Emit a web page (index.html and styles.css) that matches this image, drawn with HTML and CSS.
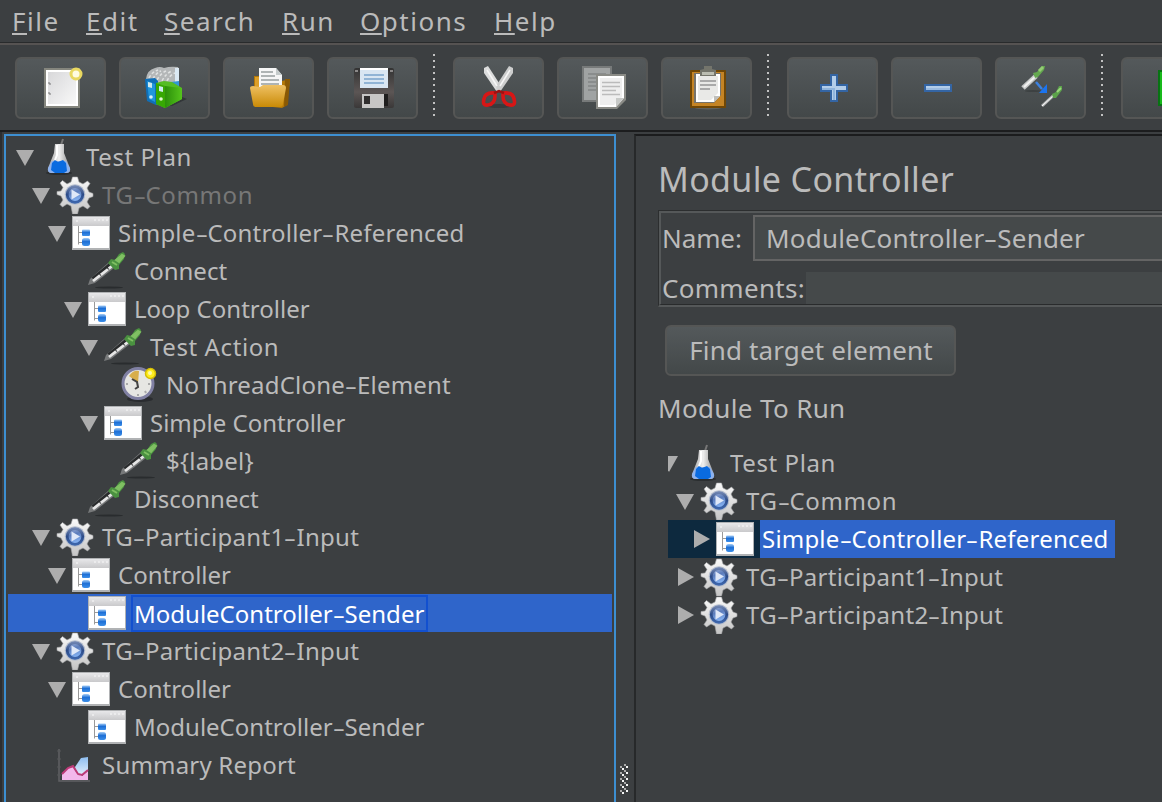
FILE: index.html
```html
<!DOCTYPE html>
<html lang="en">
<head>
<meta charset="utf-8">
<title>Module Controller</title>
<link rel="stylesheet" href="styles.css">
</head>
<body>
<svg class="defs" width="0" height="0">
  <defs>
    <linearGradient id="gBar" x2="0" y2="1"><stop offset="0" stop-color="#e8e8ea"/><stop offset="1" stop-color="#c9c9cb"/></linearGradient>
    <linearGradient id="gGear" x2="0" y2="1"><stop offset="0" stop-color="#fafafa"/><stop offset="1" stop-color="#c4c4c4"/></linearGradient>
    <linearGradient id="gBlue" x2="0.3" y2="1"><stop offset="0" stop-color="#a4b6dc"/><stop offset=".45" stop-color="#5b7cbb"/><stop offset="1" stop-color="#86b4f5"/></linearGradient>
    <linearGradient id="gRing" x2="0" y2="1"><stop offset="0" stop-color="#6d83b0"/><stop offset=".5" stop-color="#2d4c88"/><stop offset="1" stop-color="#3c65ab"/></linearGradient>
    <linearGradient id="gGlass" x2="1" y2="0"><stop offset="0" stop-color="#9a9a9a"/><stop offset=".5" stop-color="#f0f0f0"/><stop offset="1" stop-color="#8d8d8d"/></linearGradient>
    <linearGradient id="gFolder" x2="0" y2="1"><stop offset="0" stop-color="#efc164"/><stop offset="1" stop-color="#c98a06"/></linearGradient>
    <linearGradient id="gPage" x2="1" y2="1"><stop offset="0" stop-color="#d8d8da"/><stop offset="1" stop-color="#f8f8f8"/></linearGradient>
    <linearGradient id="gDisk" x2="0" y2="1"><stop offset="0" stop-color="#333"/><stop offset=".6" stop-color="#5c5655"/><stop offset="1" stop-color="#3a3838"/></linearGradient>
    <linearGradient id="gArea" x2="0" y2="1"><stop offset="0" stop-color="#8dbdf0"/><stop offset="1" stop-color="#e6f1fd"/></linearGradient>
    <linearGradient id="gGreen" x2="1" y2="0"><stop offset="0" stop-color="#2b8f0a"/><stop offset="1" stop-color="#55c41c"/></linearGradient>
    <linearGradient id="gNode" x2="0" y2="1"><stop offset="0" stop-color="#a5cdf6"/><stop offset=".45" stop-color="#1d6fd6"/><stop offset="1" stop-color="#3d8fe8"/></linearGradient>
  </defs>
  <symbol id="down" viewBox="0 0 18 38"><path d="M0 12h18L9 28z" fill="#adadad"/></symbol>
  <symbol id="right" viewBox="0 0 18 38"><path d="M2 10v18l16-9z" fill="#adadad"/></symbol>
  <symbol id="flask" viewBox="0 0 38 38">
    <ellipse cx="19" cy="35" rx="13" ry="2" fill="#2b2e30"/>
    <path d="M23 1l-2 6" stroke="#777" stroke-width="2"/>
    <path d="M15 6h9v9l6 15q1 5-4 5H12q-5 0-4-5l6-15z" fill="url(#gGlass)"/>
    <path d="M12 23h14l4 7q1 5-4 5H12q-5 0-4-5z" fill="#8db2ee"/>
    <path d="M12 25l3-3 3 2 5-2 3 3 1 8-3 2h-9l-4-3z" fill="#0a6be0"/>
    <path d="M17 7v10l-2 5" stroke="#fff" stroke-width="2" fill="none"/>
  </symbol>
  <symbol id="gear" viewBox="0 0 38 38">
    <path d="M16.500 1h5l1.500 5 4 2 4.500-3 2.500 2.500-3 4.500 2 4 4 1.500v3l-4 1.500-2 4 3 4.500-2.500 2.500-4.500-3-4 2-1.500 6h-5L15 30l-4-2-4.500 3L4 28.500 7 24l-2-4-4-1.500v-3L5 15l2-3.500L4 7l2.500-2.500L11 8l4-2z" fill="url(#gGear)" stroke="#a4a6a7" stroke-width=".6"/>
    <circle cx="19" cy="18.500" r="10.300" fill="#b3bccd"/>
    <circle cx="19" cy="18.500" r="7.800" fill="url(#gBlue)" stroke="url(#gRing)" stroke-width="2.800"/>
    <path d="M15.500 13.500l8.500 5-8.500 5z" fill="#dfe8f8"/>
  </symbol>
  <symbol id="window" viewBox="0 0 38 38">
    <path d="M0 2h38v34H0z" fill="#b0b2b4"/><path d="M1 11h36v23H1z" fill="#fff"/>
    <path d="M1 3h36v9H1z" fill="url(#gBar)"/>
    <path d="M4 7h2M22 6h2m2 0h2m2 0h2m2 0h2" stroke="#efeff1" stroke-width="1.500"/>
    <path d="M6.500 12v18.500M6 18.500h4M6 28.500h4" stroke="#999" fill="none"/>
    <rect x="10" y="15.500" width="8" height="6.500" rx="1" fill="url(#gNode)"/>
    <rect x="10" y="24" width="8" height="8" rx="2.500" fill="url(#gNode)"/>
  </symbol>
  <symbol id="dropper" viewBox="0 0 38 38">
    <ellipse cx="21" cy="35.500" rx="14" ry="1" fill="#292c2e"/>
    <path d="M0 33l2-6L20 11l6 5L7 31z" fill="#77797a"/>
    <path d="M5 27L22 13" stroke="#292b2c" stroke-width="4"/>
    <path d="M5 29L24 14" stroke="#e6e6e6" stroke-width="2.800" stroke-dasharray="9 1"/>
    <path d="M20 11l3-4 4 1 4-6 4-2 2 2-1 5-5 6v4l-4 1z" fill="#4a9140"/>
    <path d="M24 10l5 3M28 8l6-5 2 1-5 6z" stroke="#7fbf62" stroke-width="2" fill="#83c466"/>
  </symbol>
  <symbol id="timer" viewBox="0 0 38 38">
    <ellipse cx="20" cy="33" rx="13" ry="3" fill="#2a2c30"/>
    <circle cx="18" cy="17.500" r="15" fill="#e6e6e3" stroke="#8080a3" stroke-width="3"/>
    <path d="M18 17L9 10q4-6 10-5z" fill="#d8ae4c"/>
    <path d="M12 13l5 3 1 5-3 2" stroke="#444" stroke-width="2" fill="none"/>
    <path d="M18 28v2M28 18h2M6 18h2M25 25l1 2" stroke="#aaa" stroke-width="2"/>
    <circle cx="30.500" cy="7.500" r="5" fill="#ffee20" stroke="#d4bd05" stroke-width="1.500"/><circle cx="30" cy="7" r="2" fill="#fff9a9"/>
  </symbol>
  <symbol id="chart" viewBox="0 0 38 38">
    <path d="M3 3v32h31" stroke="#606264" stroke-width="1.500" fill="none"/>
    <path d="M1 5h4M1 13h4M1 21h4M1 29h4" stroke="#56585a"/>
    <path d="M19 21l6-9 7-1v14l-7 5-5-1z" fill="url(#gArea)"/>
    <path d="M6 34v-6l6-6 5-1 5 8 4 1 6-5v9z" fill="#f3b8ec"/>
    <path d="M6 28l6-6 5-2 5 8 4 1 6-5" stroke="#bd3a78" stroke-width="2" fill="none"/>
  </symbol>
</svg>

<nav class="menubar">
  <span><u>F</u>ile</span><span><u>E</u>dit</span><span><u>S</u>earch</span><span><u>R</u>un</span><span><u>O</u>ptions</span><span><u>H</u>elp</span>
</nav>

<div class="toolbar">
  <div class="group">
    <button class="tool"><svg viewBox="0 0 48 48"><path d="M8 4h36v40H8z" fill="#85867e"/><path d="M10 6h32v36H10z" fill="#fff"/><path d="M12 8h28v32H12z" fill="url(#gPage)"/><path d="M12 19h2v2m-2 8h2v2" stroke="#777" fill="none"/><circle cx="40" cy="10" r="5" fill="#fffce0" stroke="#e9d860" stroke-width="3"/></svg></button>
    <button class="tool"><svg viewBox="0 0 48 48">
      <path d="M24 42l18-9 5 2-15 7z" fill="#333739"/>
      <path d="M6 15q1-9 9-11 5-2 9 0 6-2 14-1l1 3v16H20z" fill="#b4b7b8"/>
      <path d="M9 14q3-6 9-8M13 15q3-6 8-8M17 16q4-7 9-9M22 17q4-8 10-10M27 17q3-6 8-8" stroke="#e0e2e2" stroke-width="1.500" stroke-dasharray="3 2" fill="none"/>
      <path d="M35 4h4v17h-4z" fill="#dbe9f3"/>
      <path d="M5 15l10-1 3 3v23l-2 1-9-4z" fill="#0f6fb8"/><path d="M7 17l8 3v18l-6-3z" fill="#2196dd"/>
      <path d="M31 18l8-1v8z" fill="#3297d6"/>
      <path d="M16 19l8-2 8 1 10 6v11l-17 9-9-4z" fill="#55bd24"/><path d="M25 22l17 2v11l-17 9z" fill="url(#gGreen)"/><path d="M16 19l9 3v22l-9-4z" fill="#37a803"/>
      <path d="M8 18l4 1v5l-4-1zM19 22l4 1v5l-4-1z" fill="#cdeaf0"/><circle cx="11" cy="33" r="1.800" fill="#d8effc"/><circle cx="21" cy="35" r="1.800" fill="#dff6ce"/></svg></button>
    <button class="tool"><svg viewBox="0 0 48 48">
      <path d="M10 12h6v5h22l8-2-3 26-5 3-28-3z" fill="#b37808"/><path d="M11 13h5v12h-5z" fill="#dc9f28"/><path d="M41 15l5 0-2 26-4 2z" fill="#895905"/>
      <path d="M15 4h17l6 7v14H15z" fill="#f5f6f6"/><path d="M32 4v7h6z" fill="#c5cccc"/><path d="M17 8h12M17 12h14M17 16h18M17 20h18" stroke="#aeb4b4" stroke-width="2"/>
      <path d="M6 24q0-2 3-2l7 1 3-2h20q3 0 3 3l-3 16q0 3-3 3H12q-3 0-3-3z" fill="url(#gFolder)"/></svg></button>
    <button class="tool"><svg viewBox="0 0 48 48"><rect x="6" y="4" width="40" height="40" rx="2" fill="url(#gDisk)"/><path d="M12 4h28v20H12z" fill="#d9e6f2"/><path d="M12 4h28v2H12z" fill="#fff"/><path d="M16 11h20M16 15h20M16 19h20" stroke="#91b4d5" stroke-width="1.800"/><path d="M14 30h22v14H14z" fill="#c7c6c5"/><path d="M36 30h4v12h-4z" fill="#1f1e1e"/><path d="M16 32h6v8h-6z" fill="#302e2e"/><path d="M7 6h3v2H7zM42 6h3v2h-3z" fill="#8a8888"/></svg></button>
  </div>
  <i class="sep"></i>
  <div class="group">
    <button class="tool"><svg viewBox="0 0 48 48"><ellipse cx="25" cy="42" rx="12" ry="2" fill="#383b3d"/><path d="M10 4l4-2 13 20-1 6-3 0L10 9z" fill="#dcdddd"/><path d="M39 4l-4-2-13 20 1 6 3 0L39 9z" fill="#cdcece"/><path d="M13 6l10 16M36 6L26 22" stroke="#f6f6f6" stroke-width="1.500"/><path d="M21 29q-10-1-11 6-2 7 4 6 7-1 7-9zM29 29q10-1 11 6 2 7-4 6-7-1-7-9z" fill="none" stroke="#d71616" stroke-width="3.600"/><path d="M20 29l5-2 5 2" stroke="#9c1212" stroke-width="2.500" fill="none"/></svg></button>
    <button class="tool"><svg viewBox="0 0 48 48"><path d="M4 2h30v36H4z" fill="#777a7a"/><path d="M6 4h26v32H6z" fill="#a0a3a3"/><path d="M10 10h18M10 14h18M10 18h18M10 22h18M10 26h18" stroke="#838686" stroke-width="1.500"/><path d="M18 10h30v26l-9 9H18z" fill="#8a8b86"/><path d="M20 12h26v22l-8 9H20z" fill="#fff"/><path d="M22 14h22v19l-8 8H22z" fill="#eee"/><path d="M38 34h8l-8 9z" fill="#c7c9c7"/><path d="M24 18.500h18M24 22.500h18M24 26.500h14M24 30.500h18" stroke="#bbb" stroke-width="1.600"/></svg></button>
    <button class="tool"><svg viewBox="0 0 48 48"><ellipse cx="26" cy="44" rx="13" ry="1.500" fill="#606260"/><rect x="8" y="6" width="36" height="38" rx="1" fill="#704706"/><path d="M10 8h32v34H10z" fill="#c58425"/><path d="M12 9h27v22l-7 8H12z" fill="#77736a"/><path d="M14 10h24v22l-6 6H14z" fill="#fff"/><path d="M16 12h20v17l-7 7H16z" fill="#e9e9e7"/><path d="M32 32h6l-6 6z" fill="#bfbfbb"/><path d="M18 17h16M18 21h16M18 25h10" stroke="#aaa" stroke-width="2"/><path d="M18 6l4-1V2h8v3l4 1v6H18z" fill="#74756c"/><path d="M20 8h12v3H20z" fill="#bbbdb2"/></svg></button>
  </div>
  <i class="sep"></i>
  <div class="group">
    <button class="tool"><svg viewBox="0 0 48 48"><path d="M22 10h8v10h10v8H30v10h-8V28H12v-8h10z" fill="#3465a4"/><path d="M24 12h4v10h10v4H28v10h-4V26H14v-4h10z" fill="#b3cde9"/><path d="M14 25h12v11" stroke="#8fb4dc" stroke-width="2" fill="none"/></svg></button>
    <button class="tool"><svg viewBox="0 0 48 48"><path d="M12 20h28v8H12z" fill="#3465a4"/><path d="M14 22h24v4H14z" fill="#b3cde9"/><path d="M14 25h24" stroke="#9abbe1" stroke-width="2"/></svg></button>
    <button class="tool"><svg viewBox="0 0 48 48"><ellipse cx="17" cy="27" rx="8" ry="1" fill="#3d4142"/><path d="M7 24L20 12" stroke="#c6c8c8" stroke-width="5"/><path d="M8 23L20 12" stroke="#f1f1f1" stroke-width="2"/><path d="M17 9l4-1 5-6 3 0-1 4-6 7-3 1z" fill="#65a850"/><path d="M23 7l4-4" stroke="#94cc74" stroke-width="3"/><path d="M20 18l6 7" stroke="#3c82e2" stroke-width="2.500"/><path d="M31 20v9h-8z" fill="#1b74f0"/><path d="M26 42L38 31" stroke="#b4b6b6" stroke-width="3"/><path d="M26 42L38 31" stroke="#fff" stroke-width="1"/><path d="M36 30l4-2 3-6h3l0 4-6 8-3 0z" fill="#5ba14a"/><path d="M41 28l4-4" stroke="#99d67b" stroke-width="2"/></svg></button>
  </div>
  <i class="sep"></i>
  <div class="group">
    <button class="tool"><svg viewBox="0 0 48 48"><path d="M16 6l26 18-26 18z" fill="#087313"/><path d="M18 8l22 16-22 16z" fill="#0fae12"/><path d="M16 6h6v36h-6z" fill="#087313"/><path d="M18 8h4v32h-4z" fill="#18b91b"/></svg></button>
  </div>
</div>

<main class="workspace">
  <section class="tree main-tree">
    <div class="row l0 wide"><svg class="arrow"><use href="#down"/></svg><svg class="icon"><use href="#flask"/></svg><span>Test Plan</span></div>
    <div class="row l1 wide disabled"><svg class="arrow"><use href="#down"/></svg><svg class="icon"><use href="#gear"/></svg><span>TG<i class="dash">-</i>Common</span></div>
    <div class="row l2"><svg class="arrow"><use href="#down"/></svg><svg class="icon"><use href="#window"/></svg><span>Simple<i class="dash">-</i>Controller<i class="dash">-</i>Referenced</span></div>
    <div class="row l3 tight"><i class="arrow"></i><svg class="icon"><use href="#dropper"/></svg><span>Connect</span></div>
    <div class="row l3 tight"><svg class="arrow"><use href="#down"/></svg><svg class="icon"><use href="#window"/></svg><span>Loop Controller</span></div>
    <div class="row l4 wide"><svg class="arrow"><use href="#down"/></svg><svg class="icon"><use href="#dropper"/></svg><span>Test Action</span></div>
    <div class="row l5"><i class="arrow"></i><svg class="icon"><use href="#timer"/></svg><span>NoThreadClone<i class="dash">-</i>Element</span></div>
    <div class="row l4 tight"><svg class="arrow"><use href="#down"/></svg><svg class="icon"><use href="#window"/></svg><span>Simple Controller</span></div>
    <div class="row l5"><i class="arrow"></i><svg class="icon"><use href="#dropper"/></svg><span>${label}</span></div>
    <div class="row l3 tight"><i class="arrow"></i><svg class="icon"><use href="#dropper"/></svg><span>Disconnect</span></div>
    <div class="row l1 part"><svg class="arrow"><use href="#down"/></svg><svg class="icon"><use href="#gear"/></svg><span>TG<i class="dash">-</i>Participant1<i class="dash">-</i>Input</span></div>
    <div class="row l2 tight"><svg class="arrow"><use href="#down"/></svg><svg class="icon"><use href="#window"/></svg><span>Controller</span></div>
    <div class="row l3 tight selected"><i class="arrow"></i><svg class="icon"><use href="#window"/></svg><span class="focus">ModuleController<i class="dash">-</i>Sender</span></div>
    <div class="row l1 part"><svg class="arrow"><use href="#down"/></svg><svg class="icon"><use href="#gear"/></svg><span>TG<i class="dash">-</i>Participant2<i class="dash">-</i>Input</span></div>
    <div class="row l2 tight"><svg class="arrow"><use href="#down"/></svg><svg class="icon"><use href="#window"/></svg><span>Controller</span></div>
    <div class="row l3 tight"><i class="arrow"></i><svg class="icon"><use href="#window"/></svg><span>ModuleController<i class="dash">-</i>Sender</span></div>
    <div class="row l1"><i class="arrow"></i><svg class="icon"><use href="#chart"/></svg><span>Summary Report</span></div>
  </section>

  <div class="divider">
    <svg width="8" height="30" viewBox="0 0 8 30">
      <defs><pattern id="grip" width="8" height="6" patternUnits="userSpaceOnUse"><path d="M4 0h2v2H4zM0 2h2v2H0z" fill="#aaa"/><path d="M6 2h2v2H6zM2 4h2v2H2z" fill="#f4f4f4"/></pattern></defs>
      <rect width="8" height="30" fill="url(#grip)"/>
    </svg>
  </div>

  <section class="detail">
    <h1>Module Controller</h1>
    <div class="fields">
      <div class="fields-inner">
        <div class="field name"><label>Name:</label><div class="input">ModuleController<i class="dash">-</i>Sender</div></div>
        <div class="field comments"><label>Comments:</label><div class="input"></div></div>
      </div>
    </div>
    <button class="find">Find target element</button>
    <h2>Module To Run</h2>
    <div class="tree target-tree">
      <div class="row l0 wide"><svg class="arrow"><use href="#down"/></svg><svg class="icon"><use href="#flask"/></svg><span>Test Plan</span></div>
      <div class="row l1 wide"><svg class="arrow"><use href="#down"/></svg><svg class="icon"><use href="#gear"/></svg><span>TG<i class="dash">-</i>Common</span></div>
      <div class="row l2 target"><svg class="arrow"><use href="#right"/></svg><svg class="icon"><use href="#window"/></svg><span>Simple<i class="dash">-</i>Controller<i class="dash">-</i>Referenced</span></div>
      <div class="row l1 part"><svg class="arrow"><use href="#right"/></svg><svg class="icon"><use href="#gear"/></svg><span>TG<i class="dash">-</i>Participant1<i class="dash">-</i>Input</span></div>
      <div class="row l1 part"><svg class="arrow"><use href="#right"/></svg><svg class="icon"><use href="#gear"/></svg><span>TG<i class="dash">-</i>Participant2<i class="dash">-</i>Input</span></div>
    </div>
  </section>
</main>
</body>
</html>
```
FILE: styles.css
```css
* { box-sizing: border-box; }
body {
  margin: 0;
  width: 1162px;
  height: 802px;
  overflow: hidden;
  display: flex;
  flex-direction: column;
  background: #3c3f41;
  color: #bbb;
  font-family: "Noto Sans", sans-serif;
  font-size: 26px;
  white-space: nowrap;
}
.defs { position: absolute; }

.menubar {
  flex: none;
  height: 45px;
  padding-left: 12px;
  display: grid;
  grid-template-columns: 74px 78px 118px 78px 134px 100px;
  line-height: 43px;
  letter-spacing: 1.5px;
  border-bottom: 2px solid #565352;
  box-shadow: inset 0 -1px #292b2c;
}
.menubar u {
  text-decoration-thickness: 2px;
  text-underline-offset: 2px;
  text-decoration-skip-ink: none;
}

.toolbar {
  flex: none;
  height: 87px;
  padding: 9px 0 0 15px;
  display: flex;
  gap: 16px;
  overflow: hidden;
  border-bottom: 2px solid #1c1d1e;
}
.group { flex: none; display: flex; gap: 14px; padding-top: 3px; }
.tool {
  flex: none;
  width: 91px;
  height: 62px;
  margin-right: -1px;
  padding: 0 1px 0 0;
  display: flex;
  align-items: center;
  justify-content: center;
  border: 2px solid #555655;
  border-radius: 6px;
  background: linear-gradient(#54595b, #434849);
}
.tool svg { width: 48px; height: 48px; flex: none; }
.sep {
  flex: none;
  width: 2px;
  height: 62px;
  background: repeating-linear-gradient(#c2c2c2 0 2px, transparent 2px 6px);
}
.group + .sep { margin-right: 2px; }

.workspace { flex: 1; display: flex; min-height: 0; padding: 2px 0 0 2px; box-shadow: inset 2px 0 #2c2e30; }
.main-tree {
  flex: none;
  width: 612px;
  height: 690px;
  margin-left: 2px;
  padding: 2px;
  border: 2px solid #3d8fd1;
}
.row { height: 38px; display: flex; align-items: center; font-size: 24px; line-height: 38px; letter-spacing: .2px; }
.row .arrow { flex: none; width: 18px; height: 38px; margin-right: 6px; }
.row .icon { flex: none; width: 38px; height: 38px; margin-right: 8px; }
.row.l0 { padding-left: 8px; }
.row.l1 { padding-left: 24px; }
.row.l2 { padding-left: 40px; }
.row.l3 { padding-left: 56px; }
.row.l4 { padding-left: 72px; }
.row.l5 { padding-left: 88px; }
.row.tight { letter-spacing: 0; }
.row.wide { letter-spacing: .6px; }
.row.part { letter-spacing: .3px; }
.row.disabled { color: #777; }
.row.selected { background: #2f65ca; color: #fff; }
.dash {
  display: inline-block;
  width: .5em;
  font-style: normal;
  letter-spacing: 0;
  text-align: center;
  transform: scaleX(1.6);
}
.focus {
  height: 37px;
  line-height: 33px;
  margin-left: -3px;
  padding: 0 2px 0 1px;
  border: 2px solid #1250cf;
}

.divider {
  flex: none;
  width: 18px;
  display: flex;
  align-items: flex-end;
  padding: 0 0 8px 4px;
}

.detail {
  flex: 1;
  min-width: 0;
  overflow: hidden;
  border-left: 2px solid #27292a;
  border-top: 2px solid #1b1c1d;
  padding-left: 22px;
}
h1 { margin: 19px 0 6px 0; font-size: 34px; line-height: 49px; font-weight: 400; letter-spacing: .35px; }
.fields { height: 97px; border: 1px solid #2c2e2f; border-right: 0; border-bottom: 2px solid #555859; }
.fields-inner { height: 94px; border: 2px solid #555859; border-right: 0; border-bottom: 1px solid #292b2c; padding-top: 2px; }
.field { display: flex; align-items: center; padding-left: 1px; letter-spacing: .2px; }
.name label { width: 91px; letter-spacing: -.1px; }
.name .input { flex: 1; height: 46px; line-height: 43px; padding-left: 11px; border: 2px solid #646464; border-right: 0; background: #45494a; }
.comments { margin-top: 11px; height: 32px; line-height: 32px; }
.comments label { width: 144px; letter-spacing: .3px; }
.comments .input { flex: 1; height: 32px; background: #45494a; }
.find {
  display: block;
  width: 291px;
  height: 51px;
  margin: 18px 0 0 7px;
  padding: 0 0 1px 1px;
  border: 2px solid #555655;
  border-radius: 6px;
  background: linear-gradient(#54595b, #434849);
  color: #bbb;
  font: 26px/45px "Noto Sans", sans-serif;
  letter-spacing: .15px;
}
h2 { margin: 13px 0 16px 0; font-size: 26px; line-height: 39px; font-weight: 400; letter-spacing: .35px; }
.target-tree { margin-left: 10px; overflow: hidden; }
.target-tree .row { margin-left: -16px; }
.target-tree .target { width: max-content; background: #0d293e; color: #fff; }
.target span { margin-left: -2px; padding: 0 7px 0 2px; background: #2f65ca; }
```
